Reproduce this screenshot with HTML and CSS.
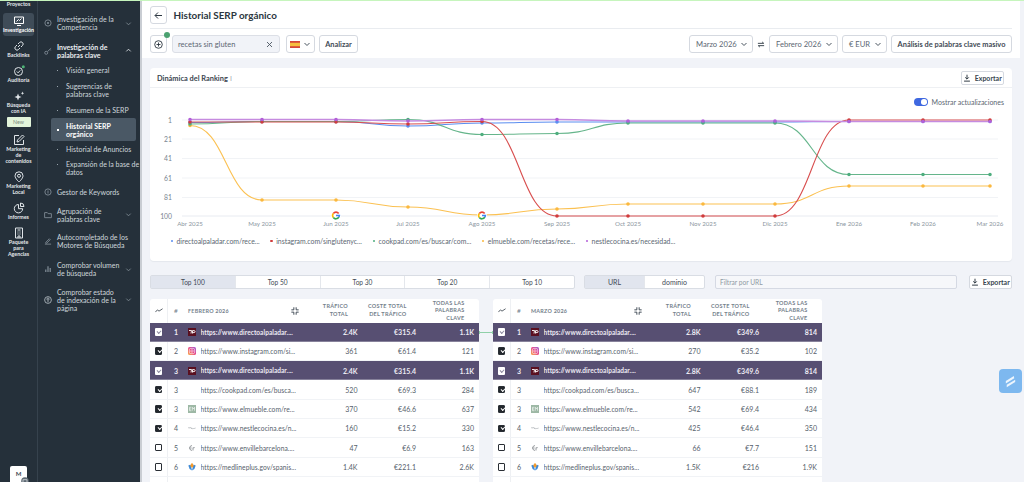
FILE: index.html
```html
<!DOCTYPE html>
<html lang="es">
<head>
<meta charset="utf-8">
<title>Historial SERP orgánico</title>
<link rel="stylesheet" href="styles.css">
</head>
<body>
<svg class="sprite" width="0" height="0" aria-hidden="true">
  <defs>
    <symbol id="fav-dap" viewBox="0 0 8 8"><rect width="8" height="8" fill="#5a1020"/><path d="M1 2.5h2.5L3 5.5M4.5 5.5V2.6h1.6q1 0 1 1t-1 1H4.5" fill="none" stroke="#fff" stroke-width=".9"/></symbol>
    <symbol id="fav-ig" viewBox="0 0 8 8"><defs><linearGradient id="ig" x1="0" y1="1" x2="1" y2="0"><stop offset="0" stop-color="#f9b34a"/><stop offset=".5" stop-color="#ea4c89"/><stop offset="1" stop-color="#9a5bd6"/></linearGradient></defs><rect width="8" height="8" rx="1.6" fill="url(#ig)"/><rect x="1.4" y="1.4" width="5.2" height="5.2" rx="1.4" fill="none" stroke="#fff" stroke-width=".55"/><circle cx="4" cy="4" r="1.2" fill="none" stroke="#fff" stroke-width=".55"/></symbol>
    <symbol id="fav-em" viewBox="0 0 8 8"><rect width="8" height="8" fill="#9db8a5"/><path d="M3.3 2.3H1.5v3.4h1.8M1.5 4h1.5M4.3 5.7V2.3L5.4 4l1.1-1.7v3.4" fill="none" stroke="#fff" stroke-width=".6"/></symbol>
    <symbol id="fav-ne" viewBox="0 0 8 8"><path d="M.5 4.2c1-1 2-.6 3 0s2 .4 4-.2" fill="none" stroke="#b4b8bc" stroke-width="1.2" stroke-dasharray="1 .4"/></symbol>
    <symbol id="fav-en" viewBox="0 0 8 8"><path d="M4 1.5Q1.5 2 1.5 4T4 6.5M1.8 4H3.6M5 6.5V3.6M5 4.2q.6-.8 1.7-.6" fill="none" stroke="#6d7378" stroke-width=".7"/></symbol>
    <symbol id="fav-ml" viewBox="0 0 8 8"><path d="M.3 2.5 2.6 1.6 4 7.4 1.6 6Z" fill="#3f8ad6"/><path d="M7.7 2.5 5.4 1.6 4 7.4 6.4 6Z" fill="#3f8ad6"/><path d="M3 .6h2v1.7h1.2L4 4.9 1.8 2.3H3Z" fill="#f59b2b"/></symbol>
    <symbol id="compress" viewBox="0 0 9 9"><path d="M3.200.3v2.900H.4M5.800.3v2.900h2.800M3.200 8.700V5.800H.4M5.800 8.700V5.800h2.800" fill="none" stroke="#3f4a55" stroke-width="1.100"/></symbol>
    <symbol id="trend" viewBox="0 0 10 6"><path d="M.5 5 3 2.2l2 1.6L9.500 .8" fill="none" stroke="#333d47" stroke-width="1"/></symbol>
    <symbol id="chev" viewBox="0 0 8 8"><path d="M1.500 3 4 5.500 6.500 3" fill="none" stroke="currentColor" stroke-width="1"/></symbol>
    <symbol id="down" viewBox="0 0 9 9"><path d="M4.500 .8v4.800M2.500 3.800l2 2 2-2M1.200 8h6.600" fill="none" stroke="#2b3640" stroke-width="1.100"/></symbol>
    <symbol id="goog" viewBox="0 0 12 12"><circle cx="6" cy="6" r="6" fill="#fff"/><path d="M9.200 3.600A4 4 0 0 0 2.800 3.600" fill="none" stroke="#ea4335" stroke-width="2"/><path d="M2.800 3.600a4 4 0 0 0 0 4.800" fill="none" stroke="#fbbc05" stroke-width="2"/><path d="M2.800 8.400a4 4 0 0 0 6.600-.4" fill="none" stroke="#34a853" stroke-width="2"/><path d="M9.400 8A4 4 0 0 0 10 6H6" fill="none" stroke="#4285f4" stroke-width="2"/></symbol>
  </defs>
</svg>

<div class="topline"></div>
<div class="app">
  <aside class="rail">
    <div class="rail-item"><span class="rail-label">Proyectos</span></div>
    <div class="rail-item is-active">
      <svg class="rail-icon" viewBox="0 0 12 12"><path d="M1.500 2h9v6.500h-9zM4 10.500h4M3.500 6.500l2-2 1 1 2-2" fill="none" stroke="#fff" stroke-width="1"/></svg>
      <span class="rail-label">Investigación</span>
    </div>
    <div class="rail-item">
      <svg class="rail-icon" viewBox="0 0 12 12"><path d="M5 7l2-2M4 5 2.500 6.500a2.100 2.100 0 0 0 3 3L7 8M8 7l1.500-1.500a2.100 2.100 0 0 0-3-3L5 4" fill="none" stroke="#dfe4e8" stroke-width="1"/></svg>
      <span class="rail-label">Backlinks</span>
    </div>
    <div class="rail-item">
      <svg class="rail-icon" viewBox="0 0 12 12"><circle cx="5.500" cy="6.500" r="4" fill="none" stroke="#dfe4e8" stroke-width="1"/><path d="M3.800 6.500l1.300 1.300 2.200-2.400" fill="none" stroke="#dfe4e8"/><circle cx="10.300" cy="1.800" r="1.500" fill="#4fb477"/></svg>
      <span class="rail-label">Auditoría</span>
    </div>
    <div class="rail-item">
      <svg class="rail-icon" viewBox="0 0 12 12"><path d="M5 3.500 6 6l2.500 1L6 8 5 10.500 4 8 1.500 7 4 6ZM9.500 1.500l.5 1.200 1.200.5-1.200.5-.5 1.200-.5-1.200-1.200-.5 1.200-.5Z" fill="#dfe4e8"/></svg>
      <span class="rail-label">Búsqueda<br>con IA</span>
    </div>
    <span class="rail-new">New</span>
    <div class="rail-item">
      <svg class="rail-icon" viewBox="0 0 12 12"><path d="M6 1.500H1.500v9h9V6M4 8l.5-2L9.500 1l1.500 1.500-5 5Z" fill="none" stroke="#dfe4e8" stroke-width="1"/></svg>
      <span class="rail-label">Marketing<br>de<br>contenidos</span>
    </div>
    <div class="rail-item">
      <svg class="rail-icon" viewBox="0 0 12 12"><path d="M6 11S2 7.500 2 4.800a4 4 0 0 1 8 0C10 7.500 6 11 6 11Z" fill="none" stroke="#dfe4e8" stroke-width="1"/><circle cx="6" cy="4.800" r="1.500" fill="none" stroke="#dfe4e8"/></svg>
      <span class="rail-label">Marketing<br>Local</span>
    </div>
    <div class="rail-item">
      <svg class="rail-icon" viewBox="0 0 12 12"><path d="M5.500 2.500a4.200 4.200 0 1 0 4.200 4.200H5.500Z" fill="none" stroke="#dfe4e8"/><path d="M7.500 1v3.500H11A3.500 3.500 0 0 0 7.500 1Z" fill="none" stroke="#dfe4e8"/></svg>
      <span class="rail-label">Informes</span>
    </div>
    <div class="rail-item">
      <svg class="rail-icon" viewBox="0 0 12 12"><path d="M2.500 1h7v10h-7zM4.500 3h3M4.500 5h1M6.500 5h1M4.500 7h1M6.500 7h1M5 11V9h2v2" fill="none" stroke="#dfe4e8"/></svg>
      <span class="rail-label">Paquete<br>para<br>Agencias</span>
    </div>
    <div class="avatar">M<svg class="avatar-cam" viewBox="0 0 8 8"><circle cx="4" cy="4" r="3.800" fill="#5e6a74"/><rect x="2" y="2.800" width="4" height="3" fill="none" stroke="#fff" stroke-width=".6"/></svg></div>
  </aside>

  <nav class="nav">
    <div class="nav-group">
      <svg class="nav-icon" viewBox="0 0 9 9"><circle cx="4.500" cy="4.500" r="3.500" fill="none" stroke="#7f8b95"/><circle cx="4.500" cy="4.500" r="1.200" fill="#7f8b95"/></svg>
      <span class="nav-text">Investigación de la<br>Competencia</span>
      <svg class="nav-chev"><use href="#chev"/></svg>
    </div>
    <div class="nav-group is-open">
      <svg class="nav-icon" viewBox="0 0 9 9"><circle cx="2.500" cy="6.500" r="1.700" fill="none" stroke="#7f8b95"/><path d="M4 5l4-3.500M6.500 2.800l1 1" fill="none" stroke="#7f8b95"/></svg>
      <span class="nav-text">Investigación de<br>palabras clave</span>
      <svg class="nav-chev nav-chev-up"><use href="#chev"/></svg>
    </div>
    <ul class="nav-sub">
      <li>Visión general</li>
      <li>Sugerencias de<br>palabras clave</li>
      <li>Resumen de la SERP</li>
      <li class="is-current">Historial SERP<br>orgánico</li>
      <li>Historial de Anuncios</li>
      <li class="is-last">Expansión de la base de<br>datos</li>
    </ul>
    <div class="nav-group">
      <svg class="nav-icon" viewBox="0 0 9 9"><circle cx="4.500" cy="4.500" r="3.500" fill="none" stroke="#7f8b95"/><path d="M4.500 2.800v3.400" stroke="#7f8b95"/></svg>
      <span class="nav-text">Gestor de Keywords</span>
    </div>
    <div class="nav-group">
      <svg class="nav-icon" viewBox="0 0 9 9"><path d="M.7 1.800h3l1 1.200h3.600v4.500H.7Z" fill="none" stroke="#7f8b95"/></svg>
      <span class="nav-text">Agrupación de<br>palabras clave</span>
      <svg class="nav-chev"><use href="#chev"/></svg>
    </div>
    <div class="nav-group nav-group-wide">
      <svg class="nav-icon" viewBox="0 0 9 9"><path d="M1 8h7M2 6l4-4 1 1-4 4H2Z" fill="none" stroke="#7f8b95"/></svg>
      <span class="nav-text">Autocompletado de los<br>Motores de Búsqueda</span>
    </div>
    <div class="nav-group">
      <svg class="nav-icon" viewBox="0 0 9 9"><path d="M2 8V5M4.500 8V1.500M7 8V3.500" fill="none" stroke="#7f8b95" stroke-width="1.400"/></svg>
      <span class="nav-text">Comprobar volumen<br>de búsqueda</span>
      <svg class="nav-chev"><use href="#chev"/></svg>
    </div>
    <div class="nav-group">
      <svg class="nav-icon" viewBox="0 0 9 9"><circle cx="4.500" cy="4.500" r="3.800" fill="none" stroke="#aab3ba"/><circle cx="4.500" cy="3.500" r="1.200" fill="none" stroke="#aab3ba"/><path d="M4.500 5v2" stroke="#aab3ba"/></svg>
      <span class="nav-text">Comprobar estado<br>de indexación de la<br>página</span>
      <svg class="nav-chev"><use href="#chev"/></svg>
    </div>
  </nav>

  <main class="main">
    <header class="top">
      <div class="title-row">
        <button class="btn btn-icon"><svg class="ico-9" viewBox="0 0 9 9"><path d="M8 4.500H1.200M4 1.500l-3 3 3 3" fill="none" stroke="#2b3640" stroke-width="1"/></svg></button>
        <h1 class="title">Historial SERP orgánico</h1>
      </div>
      <div class="controls">
        <button class="btn btn-icon btn-add"><svg class="ico-9" viewBox="0 0 9 9"><circle cx="4.500" cy="4.500" r="3.800" fill="none" stroke="#2b3640" stroke-width=".9"/><path d="M4.500 2.500v4M2.500 4.500h4" stroke="#2b3640" stroke-width=".9"/></svg><span class="add-dot"></span></button>
        <div class="search"><span>recetas sin gluten</span><svg class="ico-7" viewBox="0 0 7 7"><path d="M1 1l5 5M6 1 1 6" stroke="#4a5560" stroke-width=".9"/></svg></div>
        <button class="btn btn-flag"><svg class="flag" viewBox="0 0 10 7"><rect width="10" height="7" fill="#d6453a"/><rect y="1.800" width="10" height="3.400" fill="#f5bd3e"/></svg><svg class="ico-8"><use href="#chev"/></svg></button>
        <button class="btn btn-strong w-39">Analizar</button>
        <div class="controls-right">
          <button class="btn btn-select w-64">Marzo 2026<svg class="ico-8"><use href="#chev"/></svg></button>
          <svg class="swap" viewBox="0 0 9 7"><path d="M1 2.200h6.500M5.800.6l1.800 1.600M8 4.800H1.500M3.200 6.400 1.400 4.800" fill="none" stroke="#2b3640" stroke-width="1"/></svg>
          <button class="btn btn-select w-69">Febrero 2026<svg class="ico-8"><use href="#chev"/></svg></button>
          <button class="btn btn-select w-45">€ EUR<svg class="ico-8"><use href="#chev"/></svg></button>
          <button class="btn btn-strong w-121">Análisis de palabras clave masivo</button>
        </div>
      </div>
    </header>

    <div class="content">
      <section class="card">
        <div class="card-head">
          <h2 class="card-title">Dinámica del Ranking <span class="card-info">ⅰ</span></h2>
          <button class="btn btn-export"><svg class="ico-8b"><use href="#down"/></svg>Exportar</button>
        </div>
        <div class="toggle-row"><span class="toggle"></span><span>Mostrar actualizaciones</span></div>
        <svg class="chart" viewBox="150 108 862 122">
          <g class="grid">
            <path d="M182 121H998M182 140H998M182 159.500H998M182 179H998M182 198.500H998"/>
            <path class="grid-base" d="M182 217H998"/>
          </g>
          <g class="y-labels">
            <text x="172" y="123.500">1</text><text x="172" y="142.500">21</text><text x="172" y="162">41</text><text x="172" y="181.500">61</text><text x="172" y="201">81</text><text x="172" y="219.500">100</text>
          </g>
          <g class="x-labels">
            <text x="190" y="227">Abr 2025</text><text x="262" y="227">May 2025</text><text x="336" y="227">Jun 2025</text><text x="408" y="227">Jul 2025</text><text x="482" y="227">Ago 2025</text><text x="557" y="227">Sep 2025</text><text x="628" y="227">Oct 2025</text><text x="703" y="227">Nov 2025</text><text x="775" y="227">Dic 2025</text><text x="849" y="227">Ene 2026</text><text x="923" y="227">Feb 2026</text><text x="990" y="227">Mar 2026</text>
          </g>
          <path class="ln c-blue" d="M190 123.500C226 123.500 226 122.500 262 122.500L336 122.500C372 122.500 372 127 408 127C445 127 445 124 482 124C519.500 124 519.500 123 557 123L775 123C812 123 812 122.500 849 122.500L990 122.500"/>
          <path class="ln c-yellow" d="M190 126.500C226 126.500 226 201 262 201L336 201C372 201 372 208 408 208C445 208 445 216 482 216C519.500 216 519.500 210 557 210C592.500 210 592.500 205 628 205L775 205C812 205 812 187 849 187L990 187"/>
          <path class="ln c-green" d="M190 125C226 125 226 122.500 262 122.500L336 122.500C372 122.500 372 120.500 408 120.500C445 120.500 445 135.500 482 135.500C519.500 135.500 519.500 134.500 557 134.500C592.500 134.500 592.500 124 628 124L775 124C812 124 812 175.500 849 175.500L990 175.500"/>
          <path class="ln c-red" d="M190 123L336 123C372 123 372 125 408 125C445 125 445 122.500 482 122.500C519.500 122.500 519.500 217 557 217L775 217C812 217 812 121 849 121L990 121"/>
          <path class="ln c-purple" d="M190 120.500L336 120.500C372 120.500 372 122 408 122C445 122 445 120.500 482 120.500L557 120.500C592.500 120.500 592.500 122 628 122L775 122C812 122 812 122.500 849 122.500L990 122.500"/>
          <path class="dots c-blue" d="M190 123.500h0M262 122.500h0M336 122.500h0M408 127h0M482 124h0M557 123h0M628 123h0M703 123h0M775 123h0M849 122.500h0M923 122.500h0M990 122.500h0"/>
          <path class="dots c-yellow" d="M190 126.500h0M262 201h0M336 201h0M408 208h0M557 210h0M628 205h0M703 205h0M775 205h0M849 187h0M923 187h0M990 187h0"/>
          <path class="dots c-green" d="M190 125h0M262 122.500h0M336 122.500h0M408 120.500h0M482 135.500h0M557 134.500h0M628 124h0M703 124h0M775 124h0M849 175.500h0M923 175.500h0M990 175.500h0"/>
          <path class="dots c-red" d="M190 123h0M262 123h0M336 123h0M408 125h0M482 122.500h0M557 217h0M628 217h0M703 217h0M775 217h0M849 121h0M923 121h0M990 121h0"/>
          <path class="dots c-purple" d="M190 120.500h0M262 120.500h0M336 120.500h0M408 122h0M482 120.500h0M557 120.500h0M628 122h0M703 122h0M775 122h0M849 122.500h0M923 122.500h0M990 122.500h0"/>
          <use href="#goog" x="331" y="211.500" width="10" height="10"/>
          <use href="#goog" x="477" y="211.500" width="10" height="10"/>
        </svg>
        <ul class="legend">
          <li><i class="dot bg-blue"></i>directoalpaladar.com/rece...</li>
          <li><i class="dot bg-red"></i>instagram.com/singlutenyc...</li>
          <li><i class="dot bg-green"></i>cookpad.com/es/buscar/com...</li>
          <li><i class="dot bg-yellow"></i>elmueble.com/recetas/rece...</li>
          <li><i class="dot bg-purple"></i>nestlecocina.es/necesidad...</li>
        </ul>
      </section>

      <div class="toolbar">
        <div class="seg seg-top">
          <span class="seg-on">Top 100</span><span>Top 50</span><span>Top 30</span><span>Top 20</span><span>Top 10</span>
        </div>
        <div class="seg seg-kind">
          <span class="seg-on">URL</span><span>dominio</span>
        </div>
        <div class="filter">Filtrar por URL</div>
        <button class="btn btn-export btn-export-b"><svg class="ico-8b"><use href="#down"/></svg>Exportar</button>
      </div>

      <div class="tables">
        <div class="tbl">
          <div class="row row-head"><span class="c-chk"><svg class="trend"><use href="#trend"/></svg></span><span class="c-num">#</span><span class="c-name">FEBRERO 2026<svg class="compress"><use href="#compress"/></svg></span><span class="c-h">TRÁFICO<br>TOTAL</span><span class="c-h">COSTE TOTAL<br>DEL TRÁFICO</span><span class="c-h">TODAS LAS<br>PALABRAS<br>CLAVE</span></div>
          <div class="row row-sel"><span class="c-chk"><i class="cb cb-light"></i></span><span class="c-num">1</span><svg class="fav"><use href="#fav-dap"/></svg><span class="c-url">https://www.directoalpaladar....</span><span class="c-v">2.4K</span><span class="c-v">€315.4</span><span class="c-v">1.1K</span></div>
          <div class="row"><span class="c-chk"><i class="cb cb-dark"></i></span><span class="c-num">2</span><svg class="fav"><use href="#fav-ig"/></svg><span class="c-url">https://www.instagram.com/si...</span><span class="c-v">361</span><span class="c-v">€61.4</span><span class="c-v">121</span></div>
          <div class="row row-sel"><span class="c-chk"><i class="cb cb-light"></i></span><span class="c-num">3</span><svg class="fav"><use href="#fav-dap"/></svg><span class="c-url">https://www.directoalpaladar....</span><span class="c-v">2.4K</span><span class="c-v">€315.4</span><span class="c-v">1.1K</span></div>
          <div class="row"><span class="c-chk"><i class="cb cb-dark"></i></span><span class="c-num">3</span><span class="fav"></span><span class="c-url">https://cookpad.com/es/busca...</span><span class="c-v">520</span><span class="c-v">€69.3</span><span class="c-v">284</span></div>
          <div class="row"><span class="c-chk"><i class="cb cb-dark"></i></span><span class="c-num">3</span><svg class="fav"><use href="#fav-em"/></svg><span class="c-url">https://www.elmueble.com/re...</span><span class="c-v">370</span><span class="c-v">€46.6</span><span class="c-v">637</span></div>
          <div class="row"><span class="c-chk"><i class="cb cb-dark"></i></span><span class="c-num">4</span><svg class="fav"><use href="#fav-ne"/></svg><span class="c-url">https://www.nestlecocina.es/n...</span><span class="c-v">160</span><span class="c-v">€15.2</span><span class="c-v">330</span></div>
          <div class="row"><span class="c-chk"><i class="cb"></i></span><span class="c-num">5</span><svg class="fav"><use href="#fav-en"/></svg><span class="c-url">https://www.envillebarcelona....</span><span class="c-v">47</span><span class="c-v">€6.9</span><span class="c-v">163</span></div>
          <div class="row"><span class="c-chk"><i class="cb"></i></span><span class="c-num">6</span><svg class="fav"><use href="#fav-ml"/></svg><span class="c-url">https://medlineplus.gov/spanis...</span><span class="c-v">1.4K</span><span class="c-v">€221.1</span><span class="c-v">2.6K</span></div>
          <div class="row"><span class="c-chk"></span></div>
        </div>
        <span class="link"></span>
        <div class="tbl">
          <div class="row row-head"><span class="c-chk"><svg class="trend"><use href="#trend"/></svg></span><span class="c-num">#</span><span class="c-name">MARZO 2026<svg class="compress"><use href="#compress"/></svg></span><span class="c-h">TRÁFICO<br>TOTAL</span><span class="c-h">COSTE TOTAL<br>DEL TRÁFICO</span><span class="c-h">TODAS LAS<br>PALABRAS<br>CLAVE</span></div>
          <div class="row row-sel"><span class="c-chk"><i class="cb cb-light"></i></span><span class="c-num">1</span><svg class="fav"><use href="#fav-dap"/></svg><span class="c-url">https://www.directoalpaladar....</span><span class="c-v">2.8K</span><span class="c-v">€349.6</span><span class="c-v">814</span></div>
          <div class="row"><span class="c-chk"><i class="cb cb-dark"></i></span><span class="c-num">2</span><svg class="fav"><use href="#fav-ig"/></svg><span class="c-url">https://www.instagram.com/si...</span><span class="c-v">270</span><span class="c-v">€35.2</span><span class="c-v">102</span></div>
          <div class="row row-sel"><span class="c-chk"><i class="cb cb-light"></i></span><span class="c-num">3</span><svg class="fav"><use href="#fav-dap"/></svg><span class="c-url">https://www.directoalpaladar....</span><span class="c-v">2.8K</span><span class="c-v">€349.6</span><span class="c-v">814</span></div>
          <div class="row"><span class="c-chk"><i class="cb cb-dark"></i></span><span class="c-num">3</span><span class="fav"></span><span class="c-url">https://cookpad.com/es/busca...</span><span class="c-v">647</span><span class="c-v">€88.1</span><span class="c-v">189</span></div>
          <div class="row"><span class="c-chk"><i class="cb cb-dark"></i></span><span class="c-num">3</span><svg class="fav"><use href="#fav-em"/></svg><span class="c-url">https://www.elmueble.com/re...</span><span class="c-v">542</span><span class="c-v">€69.4</span><span class="c-v">434</span></div>
          <div class="row"><span class="c-chk"><i class="cb cb-dark"></i></span><span class="c-num">4</span><svg class="fav"><use href="#fav-ne"/></svg><span class="c-url">https://www.nestlecocina.es/n...</span><span class="c-v">425</span><span class="c-v">€46.4</span><span class="c-v">350</span></div>
          <div class="row"><span class="c-chk"><i class="cb"></i></span><span class="c-num">5</span><svg class="fav"><use href="#fav-en"/></svg><span class="c-url">https://www.envillebarcelona....</span><span class="c-v">66</span><span class="c-v">€7.7</span><span class="c-v">151</span></div>
          <div class="row"><span class="c-chk"><i class="cb"></i></span><span class="c-num">6</span><svg class="fav"><use href="#fav-ml"/></svg><span class="c-url">https://medlineplus.gov/spanis...</span><span class="c-v">1.5K</span><span class="c-v">€216</span><span class="c-v">1.9K</span></div>
          <div class="row"><span class="c-chk"></span></div>
        </div>
      </div>
    </div>
  </main>
</div>
<div class="fab"><svg class="fab-mark" viewBox="0 0 16 16"><path d="M11.500 2 3 7.500v2.500L12 4.500ZM13 6 4 11.500V14L13 8.500Z" fill="#fff" fill-opacity=".85"/></svg></div>
</body>
</html>
```

FILE: styles.css
```css
* { box-sizing: border-box; }
html, body { margin: 0; height: 482px; overflow: hidden; }
body { font-family: "Lato", "Liberation Sans", sans-serif; color: #3a4550; background: #f1f3f8; }
button { font: inherit; color: inherit; cursor: pointer; }
ul { list-style: none; margin: 0; padding: 0; }
h1, h2 { margin: 0; }
.sprite { position: absolute; }

.topline { height: 1px; background: #c6f5bd; }
.app { display: flex; height: 481px; }

/* icon rail */
.rail { width: 38px; flex: none; background: #25303a; border-right: 1px solid #36424d; display: flex; flex-direction: column; align-items: center; gap: 7px; color: #e4e8eb; }
.rail-item { display: flex; flex-direction: column; align-items: center; width: 100%; }
.rail-item.is-active { width: 31px; margin-top: -1px; margin-bottom: -3px; padding: 2px 0 3px; background: #3f4c58; border-radius: 3px; color: #fff; }
.rail-icon { width: 12px; height: 12px; }
.rail-label { font-size: 5.300px; line-height: 6px; font-weight: 700; text-align: center; }
.rail-new { width: 24px; height: 10px; margin-top: -4px; background: #e2f4da; border-radius: 1px; color: #7a8a80; font-size: 5.300px; line-height: 10px; text-align: center; }
.avatar { position: relative; margin-top: auto; width: 17px; height: 16px; background: #fff; border-radius: 2px 2px 0 0; color: #3a4550; font-size: 6px; font-weight: 700; line-height: 16px; text-align: center; flex: none; }
.avatar-cam { position: absolute; right: -2px; bottom: -3px; width: 8px; height: 8px; }

/* section nav */
.nav { width: 102px; flex: none; background: #25303a; padding: 14px 4px 0 0; color: #cfd7dc; font-size: 7px; line-height: 8px; }
.nav-group { display: flex; align-items: center; margin-bottom: 10.500px; }
.nav-group:first-child { margin-bottom: 11.500px; }
.nav-group-wide { margin-bottom: 12px; }
.nav-icon { width: 8px; height: 8px; margin: 0 5.500px; flex: none; }
.nav-text { flex: 1; white-space: nowrap; }
.nav-chev { width: 7px; height: 7px; color: #7f8b95; flex: none; margin-right: 4px; }
.nav-chev-up { transform: rotate(180deg); color: #dfe4e8; }
.is-open { font-weight: 700; color: #e8ecef; }
.nav-sub { margin: -3px 0 12px 13px; display: flex; flex-direction: column; gap: 8px; }
.nav-sub li { position: relative; padding-left: 15px; white-space: nowrap; }
.nav-sub li::before { content: ""; position: absolute; left: 6px; top: 3.500px; width: 1px; height: 1px; background: #98a3ab; }
.nav-sub .is-current { margin: -4px 0; padding-top: 3.500px; padding-bottom: 3.500px; background: #4a5865; border-radius: 2px; color: #fff; font-weight: 700; }
.nav-sub .is-current::before { top: 10.500px; left: 5.500px; width: 2px; height: 2px; background: #fff; }
.nav-sub .is-last { margin-top: -1px; }

/* main column */
.main { flex: 1; min-width: 0; border-left: 2px solid #c9cdd3; display: flex; flex-direction: column; }
.top { background: #fff; margin-right: 4px; padding: 0 8px; height: 58px; }
.title-row { display: flex; align-items: center; gap: 6.500px; height: 28px; padding-top: 1px; border-bottom: 1px solid #e9ecf0; }
.title { font-size: 9.900px; font-weight: 700; color: #2b3640; }
.controls { display: flex; align-items: center; gap: 4.500px; height: 29px; padding-top: 1px; }
.controls-right { margin-left: auto; display: flex; align-items: center; gap: 4px; }

.btn { display: inline-flex; align-items: center; justify-content: center; height: 17.500px; padding: 0; background: #fff; border: 1px solid #d5d9e0; border-radius: 3px; font-size: 7.600px; color: #3a4550; white-space: nowrap; }
.btn-icon { width: 17px; flex: none; }
.btn-add { position: relative; }
.add-dot { position: absolute; top: -4px; right: -4px; width: 6px; height: 6px; border-radius: 50%; background: #4ba170; }
.btn-strong { font-weight: 700; color: #3f4a55; font-size: 7.400px; }
.btn-flag { width: 29px; gap: 3px; margin-left: 1px; }
.btn-select { justify-content: space-between; padding: 0 4px 0 6px; color: #5c6773; }
.w-39 { width: 39px; } .w-64 { width: 64px; } .w-69 { width: 69px; } .w-45 { width: 45px; } .w-121 { width: 121px; }
.search { width: 108.500px; height: 17.500px; display: flex; align-items: center; justify-content: space-between; padding: 0 6px 0 5.500px; background: #f1f3f8; border: 1px solid #dcdfe6; border-radius: 3px; font-size: 7.500px; color: #5c6773; }
.ico-9 { width: 9px; height: 9px; }
.ico-7 { width: 7px; height: 7px; }
.ico-8 { width: 8px; height: 8px; color: #4a5560; }
.ico-8b { width: 8px; height: 8px; }
.flag { width: 10px; height: 7px; }
.swap { width: 8px; height: 7px; }

.content { padding: 10px 12px 0 8px; }
.card { background: #fff; border-radius: 4px; height: 193px; box-shadow: 0 1px 1px rgba(40,50,70,.06); display: flex; flex-direction: column; }
.card-head { height: 20px; display: flex; align-items: center; justify-content: space-between; padding: 1px 8px 0 7px; border-bottom: 1px solid #eef0f3; flex: none; }
.card-title { font-size: 7.400px; font-weight: 700; color: #3a4550; }
.card-info { font-weight: 400; color: #9aa3ab; }
.btn-export { height: 13.500px; width: 43.500px; gap: 4px; font-size: 7px; font-weight: 700; border-radius: 2px; }
.toggle-row { height: 19px; flex: none; display: flex; align-items: center; justify-content: flex-end; gap: 4px; padding: 9px 8px 0 0; font-size: 7px; color: #5c6773; }
.toggle { position: relative; width: 14px; height: 7.500px; border-radius: 4px; background: #3f68e0; }
.toggle::after { content: ""; position: absolute; right: 1px; top: 1px; width: 5.500px; height: 5.500px; border-radius: 50%; background: #fff; }
.chart { display: block; width: 862px; height: 122px; flex: none; }
.grid path { stroke: #f1f3f6; stroke-width: 1; fill: none; }
.grid .grid-base { stroke: #e8ebf1; }
.y-labels text { font-size: 6.800px; fill: #78848f; text-anchor: end; }
.x-labels text { font-size: 6.200px; fill: #8b96a0; text-anchor: middle; }
.ln { fill: none; stroke-width: 1.100px; }
.dots { fill: none; stroke-width: 3.600px; stroke-linecap: round; }
.ln.c-blue { stroke: #5a8df0; } .dots.c-blue { stroke: #5a8df0; }
.ln.c-red { stroke: #d84e4e; } .dots.c-red { stroke: #d03c3c; }
.ln.c-green { stroke: #65b58b; } .dots.c-green { stroke: #4fae7f; }
.ln.c-yellow { stroke: #fbc152; } .dots.c-yellow { stroke: #fbb83e; }
.ln.c-purple { stroke: #c58be0; stroke-width: 1.400px; } .dots.c-purple { stroke: #b35fd8; }
.legend { display: flex; gap: 10.500px; padding: 7px 0 0 20.500px; font-size: 6.900px; line-height: 10px; color: #5c6773; }
.legend li { display: flex; align-items: center; gap: 3.500px; white-space: nowrap; }
.dot { width: 2.500px; height: 2.500px; border-radius: 50%; }
.bg-blue { background: #5a8df0; } .bg-red { background: #d03c3c; } .bg-green { background: #4fae7f; } .bg-yellow { background: #fbb83e; } .bg-purple { background: #b35fd8; }

.toolbar { display: flex; align-items: center; margin-top: 14px; height: 14px; }
.seg { display: flex; height: 14px; background: #fff; border: 1px solid #d9dde4; border-radius: 2px; font-size: 6.600px; color: #3f4a55; }
.seg span { flex: 1; display: flex; align-items: center; justify-content: center; border-left: 1px solid #e4e7ec; }
.seg span:first-child { border-left: 0; }
.seg .seg-on { background: #e1e5ee; }
.seg-top { width: 425px; }
.seg-kind { width: 121px; margin-left: 9px; font-size: 7px; }
.filter { width: 242px; height: 14px; margin-left: 10px; padding-left: 4px; border: 1px solid #d5d9e3; border-radius: 2px; background: #f6f7fa; color: #8f99a3; font-size: 6.600px; line-height: 12px; }
.btn-export-b { margin-left: auto; }

.tables { position: relative; display: flex; gap: 14px; margin-top: 10px; }
.tbl { width: 329px; flex: none; }
.row { display: grid; grid-template-columns: 18px 20px 12.500px 98px 59px 58.500px 58px 5.500px; align-items: center; height: 19.330px; background: #fff; border-bottom: 1px solid #f1f3f6; font-size: 7px; color: #56616c; }
.row-head { grid-template-columns: 18px 20px 110.500px 59px 58.500px 58px 5.500px; height: 23.500px; border-bottom: 0; border-radius: 3px 3px 0 0; }
.row-sel { background: #574f72; color: #eceaf2; box-shadow: 0 -.5px 0 #b8b5c4 inset; border-bottom: 0; font-weight: 700; }
.row-sel .c-chk { border-right-color: transparent; }
.c-chk { height: 100%; display: flex; align-items: center; justify-content: center; border-right: 1px solid #eef0f3; }
.c-num { padding-left: 6px; font-size: 7px; }
.c-name { display: flex; align-items: center; justify-content: space-between; padding-right: 0; font-size: 5.400px; font-weight: 700; color: #75818c; letter-spacing: .25px; }
.row-head .c-num { color: #75818c; font-size: 6.500px; }
.c-h { font-size: 5.500px; line-height: 7.500px; font-weight: 700; color: #75818c; text-align: right; padding-right: 9.500px; letter-spacing: .25px; white-space: nowrap; }
.c-url { white-space: nowrap; overflow: hidden; font-size: 6.700px; letter-spacing: .05px; }
.row-sel .c-url { font-size: 6.500px; }
.c-v { text-align: right; }
.fav { width: 8px; height: 8px; display: block; }
.compress { width: 8px; height: 8px; }
.trend { width: 8px; height: 5px; }
.cb { position: relative; display: block; width: 7.500px; height: 7.500px; border: 1.100px solid #2a2f35; border-radius: 1px; background: #fff; }
.cb-dark { background: #23272c; }
.cb-light { border: 0; background: #fff; }
.cb-dark::after, .cb-light::after { content: ""; position: absolute; left: 1.800px; top: .8px; width: 3px; height: 1.800px; border: solid #fff; border-width: 0 0 1px 1px; transform: rotate(-45deg); }
.cb-light::after { left: 2.300px; top: 1.800px; border-color: #8d8aa0; }
.link { position: absolute; left: 329px; top: 32px; width: 14px; height: 3px; border: solid #8fd0a8; border-width: 0 1px; background: linear-gradient(#8fd0a8, #8fd0a8) center / 100% 1px no-repeat; }

.fab { position: absolute; left: 999px; top: 369px; width: 23px; height: 24px; border-radius: 4px; background: #7db8ef; display: flex; align-items: center; justify-content: center; }
.fab-mark { width: 15px; height: 15px; }
```
